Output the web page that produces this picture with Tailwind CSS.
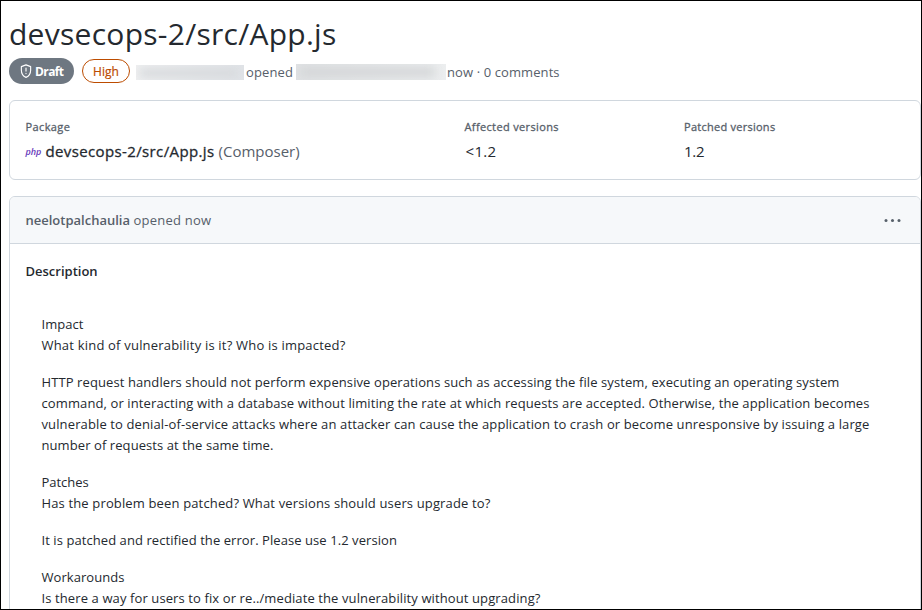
<!DOCTYPE html>
<html lang="en">
<head>
<meta charset="utf-8">
<title>devsecops-2/src/App.js</title>
<script src="https://cdn.jsdelivr.net/npm/@tailwindcss/browser@4"></script>
</head>
<body class="font-['Open_Sans','Noto_Sans',sans-serif] text-[13px] leading-[21px] text-[#24292f] bg-white">
<div class="w-[922px] h-[610px] overflow-hidden border border-black pl-2 flex flex-col">
  <h1 class="h-[57px] pt-[9px] text-[30px] leading-[48px] tracking-[0.27px] whitespace-nowrap">devsecops-2/src/App.js</h1>
  <div class="h-[26px] flex items-center whitespace-nowrap text-[#57606a]">
    <div class="w-[65px] h-[26px] rounded-full bg-[#6e7781] text-white flex items-center pl-[11px] gap-[3px] font-bold text-[12px]">
      <svg class="w-3 h-3.5" viewBox="0 0 16 16" preserveAspectRatio="none" fill="none" stroke="currentColor" stroke-width="1.5" stroke-linecap="round" stroke-linejoin="round"><path d="M8 .9 14.2 2.9V7C14.2 11 11.8 13.700 8 15.200 4.200 13.700 1.800 11 1.800 7V2.900Z"/><path d="M8 4.700V8M8 10.800V10.900"/></svg>
      <span class="tracking-[-0.6px]">Draft</span>
    </div>
    <div class="ml-2 w-12 h-6 rounded-full border border-[#bc4c00] text-[#bc4c00] flex items-center justify-center pt-px text-[12px] [-webkit-text-stroke:0.2px]">High</div>
    <div class="ml-[6px] mt-[3px] w-[108px] h-[15px] flex items-center overflow-hidden bg-linear-to-r from-[#eeeff0] to-[#e0e3e7]">
      <div class="ml-1 w-[98px] h-2 bg-[#d6d9dc] blur-[4px]"></div>
    </div>
    <span class="ml-[2px] mt-0.5 tracking-[0.115px]">opened</span>
    <div class="ml-[3px] mt-[1px] w-[150px] h-4 flex items-center overflow-hidden bg-linear-to-r from-[#e0e2e4] to-[#eceeef]">
      <div class="ml-1 w-[135px] h-2.5 bg-[#d4d6d8] blur-[5px]"></div>
    </div>
    <span class="ml-[1px] mt-0.5 tracking-[0.1px]">now · 0 comments</span>
  </div>
  <section class="mt-4 h-20 shrink-0 border border-[#d0d7de] rounded-md pl-[15.5px] pt-[15px] grid grid-cols-[439px_219.5px_1fr] content-start whitespace-nowrap">
    <div class="text-[11px] leading-[21px] text-[#57606a] [-webkit-text-stroke:0.3px] tracking-[0.38px]">Package</div>
    <div class="text-[11px] leading-[21px] text-[#57606a] [-webkit-text-stroke:0.3px] tracking-[0.36px]">Affected versions</div>
    <div class="text-[11px] leading-[21px] text-[#57606a] [-webkit-text-stroke:0.3px] tracking-[0.26px]">Patched versions</div>
    <div class="text-[15px] leading-[28px] h-[27px] flex items-center">
      <span class="font-semibold italic text-[9px] text-[#6639ba] w-5 pt-0.5">php</span><span class="[-webkit-text-stroke:0.3px] tracking-[0.374px]">devsecops-2/src/App.js</span><span class="ml-1 text-[#57606a]">(Composer)</span>
    </div>
    <div class="text-[15px] leading-[28px] pl-px tracking-[0.33px]">&lt;1.2</div>
    <div class="text-[15px] leading-[28px] tracking-[-0.3px]">1.2</div>
  </section>
  <section class="mt-4 h-[430px] shrink-0 border border-[#d0d7de] rounded-md overflow-hidden">
    <header class="h-[47px] bg-[#f6f8fa] border-b border-[#d0d7de] pl-[15.5px] pr-[17px] flex items-center text-[#57606a] whitespace-nowrap">
      <span class="font-semibold">neelotpalchaulia</span><span class="ml-[3.5px] tracking-[0.22px]">opened now</span>
      <svg class="ml-auto w-[22px] h-4" viewBox="0 0 22 16" fill="#57606a"><circle cx="5" cy="8.500" r="1.500"/><circle cx="11.500" cy="8.500" r="1.500"/><circle cx="18" cy="8.500" r="1.500"/></svg>
    </header>
    <h2 class="px-[15.5px] pt-[17px] font-semibold">Description</h2>
    <div class="px-[31.5px] pt-8 flex flex-col gap-4 whitespace-nowrap">
      <p><span class="tracking-[0.05px]">Impact</span><br><span class="tracking-[0.198px]">What kind of vulnerability is it? Who is impacted?</span></p>
      <p><span class="tracking-[0.096px]">HTTP request handlers should not perform expensive operations such as accessing the file system, executing an operating system</span><br><span class="tracking-[0.111px]">command, or interacting with a database without limiting the rate at which requests are accepted. Otherwise, the application becomes</span><br><span class="tracking-[0.121px]">vulnerable to denial-of-service attacks where an attacker can cause the application to crash or become unresponsive by issuing a large</span><br><span class="tracking-[0.082px]">number of requests at the same time.</span></p>
      <p><span class="tracking-[-0.05px]">Patches</span><br><span class="tracking-[0.145px]">Has the problem been patched? What versions should users upgrade to?</span></p>
      <p><span class="tracking-[0.07px]">It is patched and rectified the error. Please use 1.2 version</span></p>
      <p><span class="tracking-[0.053px]">Workarounds</span><br><span class="tracking-[0.108px]">Is there a way for users to fix or re../mediate the vulnerability without upgrading?</span></p>
    </div>
  </section>
</div>
</body>
</html>
